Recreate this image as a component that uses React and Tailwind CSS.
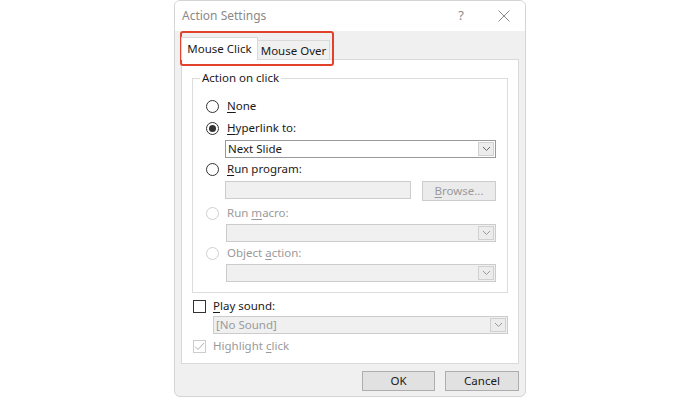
import React from "react";

const F = { fontFamily: '"Noto Sans", "Open Sans", sans-serif' };

function U({ children }) {
  return <span className="underline underline-offset-2">{children}</span>;
}

function Radio({ checked, disabled }) {
  return (
    <span
      className={`flex h-[13px] w-[13px] shrink-0 items-center justify-center rounded-full border bg-white ${
        disabled ? "border-[#cfcfcf]" : "border-[#333]"
      }`}
    >
      {checked && <span className="h-[7px] w-[7px] rounded-full bg-[#333]" />}
    </span>
  );
}

function Chevron({ color = "#666" }) {
  return (
    <svg width="9" height="6" viewBox="0 0 9 6">
      <path d="M1 1 L4.5 4.5 L8 1" fill="none" stroke={color} strokeWidth="1" />
    </svg>
  );
}

function Select({ value, disabled, className = "" }) {
  return (
    <div
      className={`flex h-[18px] items-center border ${
        disabled ? "border-[#cccccc] bg-[#f0f0f0]" : "border-[#999] bg-white"
      } ${className}`}
    >
      <span className={`flex-1 pl-[2px] text-[11.5px] leading-none ${disabled ? "text-[#9a9a9a]" : "text-[#1a1a1a]"}`}>
        {value}
      </span>
      <span className="mr-[1px] flex h-[14px] w-[16px] items-center justify-center border border-[#d0d0d0] bg-[#ececec]">
        <Chevron color={disabled ? "#999" : "#666"} />
      </span>
    </div>
  );
}

function RadioRow({ checked, disabled, children, className = "" }) {
  return (
    <div className={`flex h-[18px] items-center ${className}`}>
      <span className="ml-[13px]">
        <Radio checked={checked} disabled={disabled} />
      </span>
      <span className={`ml-[8px] text-[11.5px] leading-none ${disabled ? "text-[#9a9a9a]" : "text-[#1a1a1a]"}`}>
        {children}
      </span>
    </div>
  );
}

export default function App() {
  return (
    <div className="relative h-[398px] w-[700px] bg-white" style={F}>
      <div className="mx-auto flex h-[397px] w-[352px] flex-col overflow-hidden rounded-[6px] border border-[#d4d4d4] bg-[#f0f0f0]">
        {/* title bar */}
        <div className="flex h-[30px] shrink-0 items-center bg-white">
          <span className="ml-[7px] text-[12px] text-[#8a8a8a]">Action Settings</span>
          <span className="ml-auto mr-[34px] text-[13px] text-[#8a8a8a]">?</span>
          <svg className="mr-[15px]" width="12" height="12" viewBox="0 0 12 12">
            <path d="M0.5 0.5 L11.5 11.5 M11.5 0.5 L0.5 11.5" stroke="#8a8a8a" strokeWidth="1" />
          </svg>
        </div>

        {/* tabs */}
        <div className="ml-[6px] mt-[6px] flex h-[23px] items-end">
          <div className="relative z-10 flex h-[23px] w-[77px] items-center justify-center border border-b-0 border-[#d9d9d9] bg-white text-[11.5px] text-[#1a1a1a]">
            Mouse Click
          </div>
          <div className="-ml-px flex h-[20px] w-[73px] items-center justify-center border border-b-0 border-[#d9d9d9] bg-[#f0f0f0] pt-[1px] text-[11.5px] text-[#1a1a1a]">
            Mouse Over
          </div>
        </div>

        {/* panel */}
        <div className="mx-[6px] -mt-px h-[305px] border border-[#d9d9d9] bg-white px-[10px] pt-[11px]">
          <fieldset className="h-[222px] border border-[#dcdcdc] pl-0 pr-[10px]">
            <legend className="ml-[7px] px-[2px] text-[11.5px] leading-[14px] text-[#1a1a1a]">Action on click</legend>
            <div className="mt-[12px]">
              <RadioRow>
                <U>N</U>one
              </RadioRow>
              <RadioRow checked className="mt-[4px]">
                <U>H</U>yperlink to:
              </RadioRow>
              <Select value="Next Slide" className="ml-[32px] mt-[3px] mr-px" />
              <RadioRow className="mt-[2px]">
                <U>R</U>un program:
              </RadioRow>
              <div className="ml-[32px] mt-[3px] mr-px flex items-start">
                <div className="h-[18px] w-[186px] border border-[#cccccc] bg-[#f0f0f0]" />
                <div className="ml-auto flex h-[20px] w-[74px] items-center justify-center border border-[#cccccc] bg-[#ebebeb] text-[11.5px] leading-none text-[#9a9a9a]">
                  <U>B</U>rowse...
                </div>
              </div>
              <RadioRow disabled className="mt-[3px]">
                Run <U>m</U>acro:
              </RadioRow>
              <Select value="" disabled className="ml-[33px] mt-[2px] mr-px" />
              <RadioRow disabled className="mt-[2px]">
                Object <U>a</U>ction:
              </RadioRow>
              <Select value="" disabled className="ml-[33px] mt-[2px] mr-px" />
            </div>
          </fieldset>

          <div className="mt-[6px] flex h-[14px] items-center">
            <span className="ml-[1px] h-[13px] w-[13px] border border-[#333] bg-white" />
            <span className="ml-[7px] text-[11.5px] leading-none text-[#1a1a1a]">
              <U>P</U>lay sound:
            </span>
          </div>
          <Select value="[No Sound]" disabled className="ml-[21px] mt-[3px]" />
          <div className="mt-[5px] flex h-[14px] items-center">
            <span className="ml-[1px] flex h-[13px] w-[13px] items-center justify-center border border-[#cccccc] bg-white">
              <svg width="11" height="9" viewBox="0 0 11 9">
                <path d="M1 4.5 L4 7.5 L10 1" fill="none" stroke="#b0b0b0" strokeWidth="1" />
              </svg>
            </span>
            <span className="ml-[7px] text-[11.5px] leading-none text-[#9a9a9a]">
              Highlight <U>c</U>lick
            </span>
          </div>
        </div>

        {/* footer */}
        <div className="mr-[6px] mt-[7px] flex justify-end gap-[10px]">
          <div className="flex h-[20px] w-[73px] items-center justify-center border border-[#adadad] bg-[#e1e1e1] text-[11.5px] text-[#1a1a1a]">
            OK
          </div>
          <div className="flex h-[20px] w-[74px] items-center justify-center border border-[#adadad] bg-[#e1e1e1] text-[11.5px] text-[#1a1a1a]">
            Cancel
          </div>
        </div>
      </div>

      {/* red annotation box */}
      <div className="absolute left-[180px] top-[31px] h-[35px] w-[154px] rounded-[3px] border-2 border-[#e2412c]" />
    </div>
  );
}
